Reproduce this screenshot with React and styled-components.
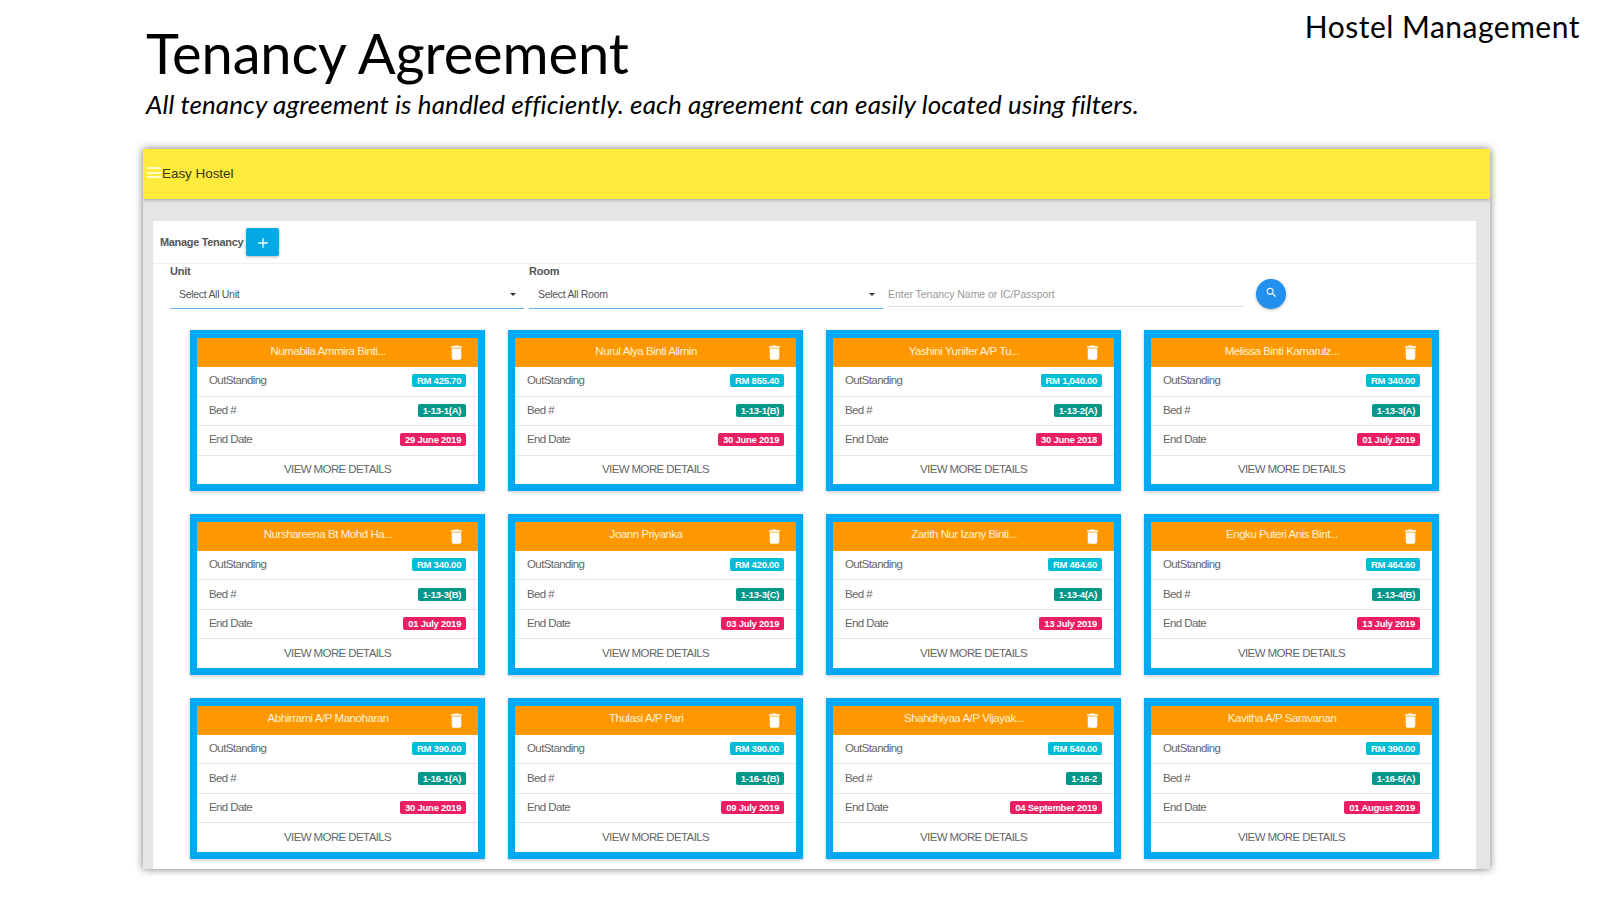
import React from "react";
import styled, { createGlobalStyle } from "styled-components";

const Global = createGlobalStyle`
  html, body { margin: 0; padding: 0; background: #fff; }
  body { width: 1600px; height: 900px; overflow: hidden; font-family: "Liberation Sans", Arial, sans-serif; }
  * { box-sizing: border-box; }
`;
const Page = styled.div`
  width: 1600px; height: 900px; display: flex; flex-direction: column; padding-left: 143px;
`;
const Top = styled.header`
  height: 149px; display: flex; justify-content: space-between; align-items: flex-start; color: #000;
  font-family: Lato, "Open Sans", sans-serif;
`;
const TitleBlock = styled.div`
  padding: 18px 0 0 3px; display: flex; flex-direction: column;
`;
const Title = styled.h1`
  margin: 0; font-size: 56px; line-height: 70px; font-weight: 400; letter-spacing: -0.13px;
`;
const Subtitle = styled.p`
  margin: 0; font-size: 26px; line-height: 32px; font-style: italic; font-weight: 400; letter-spacing: 0.1px;
`;
const Brand = styled.div`
  margin: 8px 20px 0 0; font-size: 30px; line-height: 36px; letter-spacing: 0.5px;
`;
const Frame = styled.div`
  width: 1347px; height: 720px; background: #e5e5e5; overflow: hidden; display: flex; flex-direction: column;
  box-shadow: 0 0 8px rgba(0,0,0,.55);
`;
const AppBar = styled.div`
  height: 50px; background: #ffeb3b; display: flex; align-items: center; padding: 0 0 1px 4px; gap: 1px;
  color: #37370f; font-size: 13.5px; letter-spacing: -.05px; box-shadow: 0 1px 3px rgba(0,0,0,.3); flex: none;
`;
const Burger = styled.span`
  width: 14px; height: 11px; display: block; margin-top: -2px;
  border-top: 2px solid #fffbc4; border-bottom: 2px solid #fffbc4; position: relative;
  &::after { content: ""; position: absolute; left: 0; right: 0; top: 2.5px; height: 2px; background: #fffbc4; }
`;
const Panel = styled.main`
  margin: 22px 14px 0 10px; background: #fff; flex: 1; display: flex; flex-direction: column;
`;
const PanelHead = styled.div`
  height: 43px; border-bottom: 1px solid #eee; display: flex; align-items: center; padding: 0 0 1px 7px; gap: 3px;
  color: #555; font-size: 11px; font-weight: 700; letter-spacing: -.33px;
`;
const AddBtn = styled.button`
  width: 33px; height: 28px; border: 0; border-radius: 2px; background: #03a9e4; color: #fff; padding: 2px 0 0;
  display: flex; align-items: center; justify-content: center; box-shadow: 0 1px 3px rgba(0,0,0,.3);
`;
const Filters = styled.div`
  display: flex; align-items: flex-start; padding-left: 17px; height: 60px;
`;
const Field = styled.div`
  width: 354px; margin-right: 5px; display: flex; flex-direction: column;
`;
const Label = styled.label`
  font-size: 11px; line-height: 15px; color: #555; font-weight: 700; height: 15px; letter-spacing: -.2px;
`;
const Select = styled.div`
  height: 30px; border-bottom: 1.5px solid #64b0f2; display: flex; align-items: center;
  justify-content: space-between; padding: 1px 8px 0 9px; font-size: 10.5px; color: #555; letter-spacing: -.3px;
`;
const Caret = styled.span`
  width: 0; height: 0; border-left: 3px solid transparent; border-right: 3px solid transparent; border-top: 3px solid #333;
`;
const SearchField = styled.div`
  width: 355px; height: 27px; margin-top: 16px; border-bottom: 1px solid #ddd; padding-top: 8px;
  font-size: 10.5px; letter-spacing: -.04px; color: #999;
`;
const SearchBtn = styled.button`
  width: 30px; height: 30px; margin: 15px 0 0 13px; border: 0; padding: 0 0 4px; border-radius: 50%; background: #2190ee; color: #fff;
  display: flex; align-items: center; justify-content: center; box-shadow: 0 1px 3px rgba(0,0,0,.3);
`;
const Grid = styled.div`
  display: grid; grid-template-columns: repeat(4, 295.2px); gap: 22.8px; padding: 6px 0 0 37px;
`;
const Card = styled.article`
  height: 161.2px; border: 7px solid #03a9f4; border-top-width: 8px; background: #fff; display: flex; flex-direction: column;
  box-shadow: 0 1px 3px rgba(0,0,0,.25);
`;
const CardHead = styled.div`
  height: 29px; background: #ff9800; color: #fff3dc; display: flex; align-items: center; position: relative; flex: none;
  padding: 0 19px 4px 0; font-size: 11.5px; letter-spacing: -.45px;
`;
const CardName = styled.span`
  flex: 1; text-align: center;
`;
const Trash = styled.svg`
  position: absolute; right: 12px; top: 5px; width: 19px; height: 19px; fill: #fff;
`;
const Row = styled.div`
  height: 29.5px; border-bottom: 1px solid #e7e7e7; display: flex; align-items: center; justify-content: space-between;
  padding: 0 12px 2px; font-size: 11.5px; letter-spacing: -.6px; color: #666;
`;
const Badge = styled.span`
  height: 13px; line-height: 13px; padding: 0 5px; border-radius: 2px; color: #fff; font-size: 9.5px; font-weight: 700; letter-spacing: -.25px;
  background: ${p => p.$c}; margin-top: 1px;
`;
const More = styled.div`
  flex: 1; display: flex; align-items: center; justify-content: center; padding-bottom: 2px;
  font-size: 11.5px; letter-spacing: -.6px; color: #666;
`;

const data = [
  ["Numabila Ammira Binti...", "RM 425.70", "1-13-1(A)", "29 June 2019"],
  ["Nurul Alya Binti Alimin", "RM 855.40", "1-13-1(B)", "30 June 2019"],
  ["Yashini Yunifer A/P Tu...", "RM 1,040.00", "1-13-2(A)", "30 June 2018"],
  ["Melissa Binti Kamarulz...", "RM 340.00", "1-13-3(A)", "01 July 2019"],
  ["Nurshareena Bt Mohd Ha...", "RM 340.00", "1-13-3(B)", "01 July 2019"],
  ["Joann Priyanka", "RM 420.00", "1-13-3(C)", "03 July 2019"],
  ["Zarith Nur Izany Binti...", "RM 464.60", "1-13-4(A)", "13 July 2019"],
  ["Engku Puteri Anis Bint...", "RM 464.60", "1-13-4(B)", "13 July 2019"],
  ["Abhirrami A/P Manoharan", "RM 390.00", "1-16-1(A)", "30 June 2019"],
  ["Thulasi A/P Pari", "RM 390.00", "1-16-1(B)", "09 July 2019"],
  ["Shahdhiyaa A/P Vijayak...", "RM 540.00", "1-16-2", "04 September 2019"],
  ["Kavitha A/P Saravanan", "RM 390.00", "1-16-5(A)", "01 August 2019"],
];

export default function App() {
  return (
    <Page>
      <Global />
      <Top>
        <TitleBlock>
          <Title>Tenancy Agreement</Title>
          <Subtitle>All tenancy agreement is handled efficiently. each agreement can easily located using filters.</Subtitle>
        </TitleBlock>
        <Brand>Hostel Management</Brand>
      </Top>
      <Frame>
        <AppBar><Burger />Easy Hostel</AppBar>
        <Panel>
          <PanelHead>
            Manage Tenancy
            <AddBtn aria-label="Add">
              <svg width="16" height="16" viewBox="0 0 24 24" fill="#fff"><path d="M19 13h-6v6h-2v-6H5v-2h6V5h2v6h6v2z" /></svg>
            </AddBtn>
          </PanelHead>
          <Filters>
            <Field><Label>Unit</Label><Select>Select All Unit<Caret /></Select></Field>
            <Field><Label>Room</Label><Select>Select All Room<Caret /></Select></Field>
            <SearchField>Enter Tenancy Name or IC/Passport</SearchField>
            <SearchBtn aria-label="Search">
              <svg width="13" height="13" viewBox="0 0 24 24" fill="#fff"><path d="M15.5 14h-.79l-.28-.27A6.47 6.47 0 0 0 16 9.5 6.5 6.5 0 1 0 9.5 16c1.61 0 3.09-.59 4.23-1.57l.27.28v.79l5 4.99L20.49 19l-4.99-5zm-6 0C7.01 14 5 11.99 5 9.5S7.01 5 9.5 5 14 7.01 14 9.5 11.99 14 9.5 14z" /></svg>
            </SearchBtn>
          </Filters>
          <Grid>
            {data.map(([name, amount, bed, date]) => (
              <Card key={name}>
                <CardHead>
                  <CardName>{name}</CardName>
                  <Trash viewBox="0 0 24 24"><path d="M6 19c0 1.1.9 2 2 2h8c1.1 0 2-.9 2-2V7H6v12zM19 4h-3.5l-1-1h-5l-1 1H5v2h14V4z" /></Trash>
                </CardHead>
                <Row>OutStanding<Badge $c="#00bcd4">{amount}</Badge></Row>
                <Row>Bed #<Badge $c="#009688">{bed}</Badge></Row>
                <Row>End Date<Badge $c="#e91e63">{date}</Badge></Row>
                <More>VIEW MORE DETAILS</More>
              </Card>
            ))}
          </Grid>
        </Panel>
      </Frame>
    </Page>
  );
}
